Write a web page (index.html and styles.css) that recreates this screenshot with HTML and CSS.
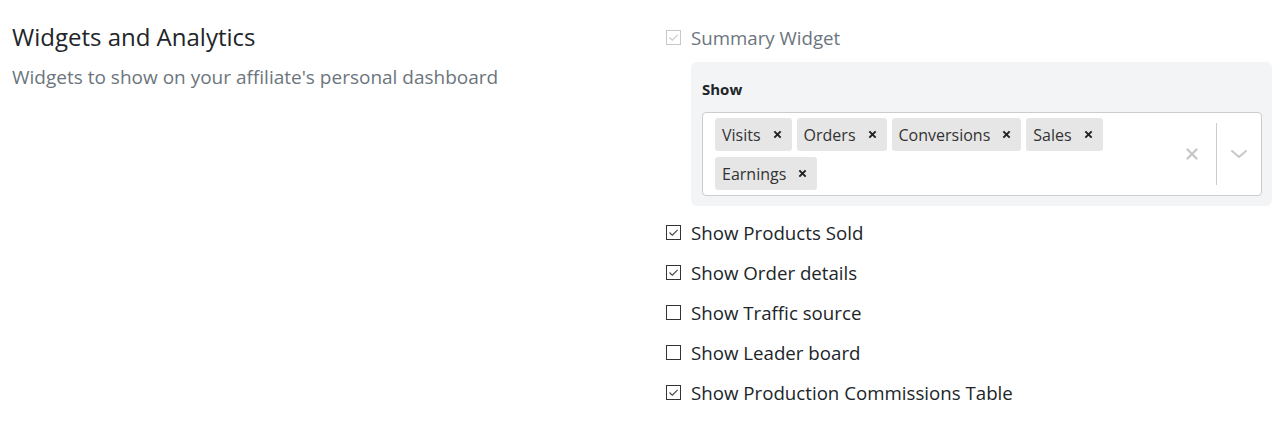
FILE: index.html
```html
<!DOCTYPE html>
<html lang="en">
<head>
<meta charset="utf-8">
<title>Widgets and Analytics</title>
<link rel="stylesheet" href="styles.css">
</head>
<body>
<section class="settings">
  <div class="intro">
    <h2 class="title">Widgets and Analytics</h2>
    <p class="desc">Widgets to show on your affiliate's personal dashboard</p>
  </div>
  <div class="options">
    <label class="check-row disabled">
      <span class="box"><svg viewBox="0 0 15 15" width="15" height="15"><path d="M3.5 7.5 L6.3 10.2 L11.6 4.8" fill="none" stroke="currentColor" stroke-width="1.1"/></svg></span>
      <span class="label">Summary Widget</span>
    </label>
    <div class="panel">
      <div class="panel-label">Show</div>
      <div class="select">
        <div class="values">
          <span class="tag"><span class="tag-text">Visits</span><span class="tag-x"><svg viewBox="0 0 10 10" width="9" height="9"><path d="M1.5 1.5 L8.5 8.5 M8.5 1.5 L1.5 8.5" stroke="currentColor" stroke-width="2.2"/></svg></span></span>
          <span class="tag"><span class="tag-text">Orders</span><span class="tag-x"><svg viewBox="0 0 10 10" width="9" height="9"><path d="M1.5 1.5 L8.5 8.5 M8.5 1.5 L1.5 8.5" stroke="currentColor" stroke-width="2.2"/></svg></span></span>
          <span class="tag"><span class="tag-text">Conversions</span><span class="tag-x"><svg viewBox="0 0 10 10" width="9" height="9"><path d="M1.5 1.5 L8.5 8.5 M8.5 1.5 L1.5 8.5" stroke="currentColor" stroke-width="2.2"/></svg></span></span>
          <span class="tag"><span class="tag-text">Sales</span><span class="tag-x"><svg viewBox="0 0 10 10" width="9" height="9"><path d="M1.5 1.5 L8.5 8.5 M8.5 1.5 L1.5 8.5" stroke="currentColor" stroke-width="2.2"/></svg></span></span>
          <span class="tag"><span class="tag-text">Earnings</span><span class="tag-x"><svg viewBox="0 0 10 10" width="9" height="9"><path d="M1.5 1.5 L8.5 8.5 M8.5 1.5 L1.5 8.5" stroke="currentColor" stroke-width="2.2"/></svg></span></span>
        </div>
        <div class="indicators">
          <span class="ind clear"><svg viewBox="0 0 12 12" width="12" height="12"><path d="M1.5 1.5 L10.5 10.5 M10.5 1.5 L1.5 10.5" stroke="currentColor" stroke-width="2.4" stroke-linecap="round"/></svg></span>
          <span class="sep"></span>
          <span class="ind chevron"><svg viewBox="0 0 16 8" width="16" height="8"><path d="M1 1 L8 7 L15 1" fill="none" stroke="currentColor" stroke-width="2" stroke-linecap="round" stroke-linejoin="round"/></svg></span>
        </div>
      </div>
    </div>
    <label class="check-row after-panel">
      <span class="box"><svg viewBox="0 0 15 15" width="15" height="15"><path d="M3.5 7.5 L6.3 10.2 L11.6 4.8" fill="none" stroke="currentColor" stroke-width="1.1"/></svg></span>
      <span class="label">Show Products Sold</span>
    </label>
    <label class="check-row">
      <span class="box"><svg viewBox="0 0 15 15" width="15" height="15"><path d="M3.5 7.5 L6.3 10.2 L11.6 4.8" fill="none" stroke="currentColor" stroke-width="1.1"/></svg></span>
      <span class="label">Show Order details</span>
    </label>
    <label class="check-row">
      <span class="box"></span>
      <span class="label">Show Traffic source</span>
    </label>
    <label class="check-row">
      <span class="box"></span>
      <span class="label">Show Leader board</span>
    </label>
    <label class="check-row">
      <span class="box"><svg viewBox="0 0 15 15" width="15" height="15"><path d="M3.5 7.5 L6.3 10.2 L11.6 4.8" fill="none" stroke="currentColor" stroke-width="1.1"/></svg></span>
      <span class="label">Show Production Commissions Table</span>
    </label>
  </div>
</section>
</body>
</html>
```

FILE: styles.css
```css
* { box-sizing: border-box; }
html, body { margin: 0; padding: 0; background: #fff; }
body {
  font-family: "Open Sans", "Noto Sans", sans-serif;
  color: #212529;
}
.settings {
  display: grid;
  grid-template-columns: 654px 1fr;
  padding: 17px 15px 0 12px;
}
.title {
  margin: 0;
  font-size: 24px;
  font-weight: 400;
  line-height: 40px;
  color: #212529;
}
.desc {
  margin: 7px 0 0;
  font-size: 19px;
  line-height: 26px;
  color: #6c757d;
}
.options {
  display: flex;
  flex-direction: column;
}
.check-row {
  display: flex;
  align-items: center;
  height: 40px;
  gap: 10px;
}
.box {
  width: 15px;
  height: 15px;
  border: 1px solid #333;
  background: #fff;
  color: #444;
  display: flex;
  align-items: center;
  justify-content: center;
  flex: none;
}
.box svg { display: block; margin: -1px; }
.label {
  font-size: 18.7px;
  color: #212529;
}
.disabled .box { border-color: #c8c8c8; color: #c8c8c8; }
.disabled .label { color: #6c757d; }
.panel {
  margin: 5px 0 0 25px;
  background: #f3f4f6;
  border-radius: 6px;
  padding: 16px 10px 10px 11px;
}
.panel-label {
  font-size: 15px;
  font-weight: 700;
  line-height: 22px;
  margin-bottom: 12px;
  color: #212529;
}
.select {
  display: flex;
  background: #fff;
  border: 1px solid #ccc;
  border-radius: 4px;
  min-height: 84px;
}
.values {
  flex: 1;
  display: flex;
  flex-wrap: wrap;
  align-content: flex-start;
  gap: 6px 5px;
  padding: 5px 10px 5px 12px;
}
.tag {
  display: inline-flex;
  align-items: center;
  height: 33px;
  background: #e6e6e6;
  border-radius: 3px;
  font-size: 16px;
  color: #333;
  padding-left: 7px;
}
.tag-x {
  display: flex;
  align-items: center;
  padding: 0 10px 0 12px;
  color: #222;
}
.indicators {
  display: flex;
  align-items: center;
  color: #c8c8c8;
}
.ind { display: flex; align-items: center; justify-content: center; }
.clear { width: 34px; margin-right: 7px; }
.sep {
  align-self: stretch;
  width: 1px;
  background: #ccc;
  margin: 10px 0;
}
.chevron { width: 44px; }
.after-panel { margin-top: 6px; }
```
